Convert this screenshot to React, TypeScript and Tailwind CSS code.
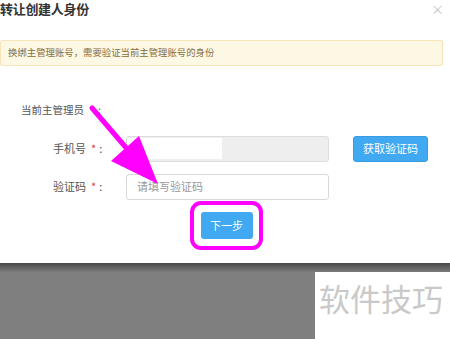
const font = { fontFamily: '"Noto Sans CJK SC", "Noto Sans", sans-serif' };

function FieldLabel({ text, required }: { text: string; required?: boolean }) {
  return (
    <div className="w-[126px] shrink-0 flex items-center pl-[53px] text-[11px] text-[#555]">
      <span>{text}</span>
      {required && <span className="ml-[5px] text-[#e4393c]">*</span>}
      <span className="ml-[3px]">:</span>
    </div>
  );
}

export default function App() {
  return (
    <div className="w-[450px] h-[339px] relative overflow-hidden bg-[#7f7f7f]" style={font}>
      {/* Dialog */}
      <div className="bg-white h-[263px] flex flex-col">
        <div className="flex items-start justify-between h-[40px]">
          <h2 className="text-[13px] font-bold text-[#333] leading-[18px] tracking-[-0.3px]">转让创建人身份</h2>
          <span className="mt-[2px] text-[13px] leading-[13px] text-[#c4c4c4] mr-[6px]">×</span>
        </div>

        {/* Alert */}
        <div className="h-[26px] mr-[7px] flex items-center pl-[7px] bg-[#fcf8e3] border border-[#f7e4b8] rounded-[2px] text-[9.4px] text-[#8a6d3b] leading-none">
          换绑主管理账号，需要验证当前主管理账号的身份
        </div>

        <div className="mt-[39px] pl-[21px] flex text-[10.5px] text-[#555] leading-none">
          <span>当前主管理员</span>
          <span className="ml-[14px]">:</span>
        </div>

        {/* Phone */}
        <div className="flex items-center h-[26px] mt-[20px]">
          <FieldLabel text="手机号" required />
          <div className="w-[203px] h-[26px] bg-[#eeeeee] border border-[#dddddd] rounded-[3px] flex items-center">
            <div className="w-[95px] h-[21px] bg-white" />
          </div>
          <button className="ml-[24px] w-[75px] h-[26px] rounded-[3px] bg-[#41a8f2] border border-[#3a9ce0] text-white text-[11px]">
            获取验证码
          </button>
        </div>

        {/* Code */}
        <div className="flex items-center h-[26px] mt-[12px]">
          <FieldLabel text="验证码" required />
          <div className="w-[203px] h-[26px] bg-white border border-[#d9d9d9] rounded-[3px] flex items-center pl-[10px] text-[11px] text-[#999]">
            请填写验证码
          </div>
        </div>

        {/* Next */}
        <div className="flex">
          <div className="ml-[190px] mt-[1px] w-[73px] h-[49px] border-[4px] border-[#ff00ff] rounded-[11px] flex items-center justify-center">
            <button className="w-[52px] h-[27px] rounded-[3px] bg-[#41a8f2] text-white text-[11px]">下一步</button>
          </div>
        </div>
      </div>

      {/* Backdrop below dialog */}
      <div className="h-[9px] bg-gradient-to-b from-[#484848] to-[#7c7c7c]" />
      <div className="flex h-[67px]">
        <div className="flex-1 bg-[#7f7f7f]" />
        <div className="w-[135px] bg-white flex items-start pl-[4px] pt-[6px]">
          <span className="text-[31px] leading-[40px] text-[#c9c9c9]">软件技巧</span>
        </div>
      </div>

      {/* Annotation arrow */}
      <svg className="absolute left-0 top-0" width="450" height="339" viewBox="0 0 450 339">
        <line x1="92" y1="108" x2="128" y2="150" stroke="#ff00ff" strokeWidth="5" strokeLinecap="round" />
        <polygon points="111,161 139,136 158,184" fill="#ff00ff" />
      </svg>
    </div>
  );
}
